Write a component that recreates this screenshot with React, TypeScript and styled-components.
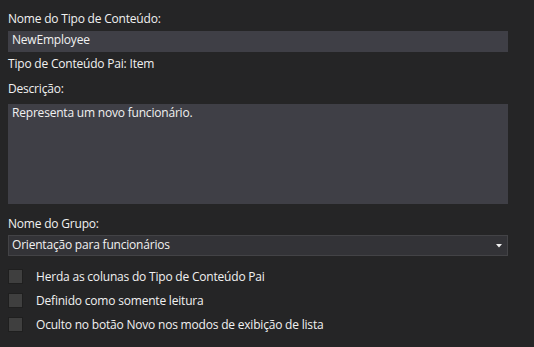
import React from "react";
import styled, { createGlobalStyle } from "styled-components";

const Global = createGlobalStyle`
  html, body { margin: 0; padding: 0; background: #252526; }
  body { font-family: "Segoe UI", "Open Sans", "Noto Sans", sans-serif; }
`;

const Page = styled.div`
  width: 534px;
  height: 347px;
  background: #252526;
  box-sizing: border-box;
  padding: 11px 0 0 8px;
  display: flex;
  flex-direction: column;
  font-size: 12px;
  line-height: 16px;
  letter-spacing: -0.2px;
  color: #f1f1f1;
  overflow: hidden;
`;

const Label = styled.div<{ $mt?: number }>`
  margin-top: ${(p) => p.$mt ?? 0}px;
  height: 16px;
  white-space: nowrap;
`;

const TextBox = styled.div<{ $mt?: number; $h?: number }>`
  margin-top: ${(p) => p.$mt ?? 0}px;
  width: 500px;
  height: ${(p) => p.$h ?? 21}px;
  box-sizing: border-box;
  background: #3f3f46;
  padding: 1px 4px 0;
  color: #f1f1f1;
  white-space: nowrap;
`;

const Select = styled.div<{ $mt?: number }>`
  margin-top: ${(p) => p.$mt ?? 0}px;
  width: 500px;
  height: 21px;
  box-sizing: border-box;
  background: #333337;
  border: 1px solid #434346;
  padding: 1px 4px 0 3px;
  display: flex;
  align-items: flex-start;
  justify-content: space-between;
`;

const Arrow = styled.svg`
  margin-top: 7px;
  margin-right: 1px;
`;

const CheckRows = styled.div`
  margin-top: 12px;
  display: flex;
  flex-direction: column;
  gap: 8px;
`;

const CheckRow = styled.div`
  display: flex;
  align-items: center;
  height: 16px;
  gap: 13px;
`;

const Box = styled.div`
  width: 15px;
  height: 15px;
  box-sizing: border-box;
  background: #3f3f3f;
  border: 1px solid #1f1f1f;
`;

const CheckText = styled.span`
  white-space: nowrap;
  padding-top: 1px;
`;

export default function App() {
  return (
    <>
      <Global />
      <Page>
        <Label>Nome do Tipo de Conteúdo:</Label>
        <TextBox $mt={4}>NewEmployee</TextBox>
        <Label $mt={4}>Tipo de Conteúdo Pai: Item</Label>
        <Label $mt={9}>Descrição:</Label>
        <TextBox $mt={7} $h={100}>Representa um novo funcionário.</TextBox>
        <Label $mt={12}>Nome do Grupo:</Label>
        <Select $mt={3}>
          <span>Orientação para funcionários</span>
          <Arrow width="6" height="4" viewBox="0 0 6 4">
            <path d="M0 0 H6 L3 3.5 Z" fill="#f1f1f1" />
          </Arrow>
        </Select>
        <CheckRows>
          <CheckRow>
            <Box />
            <CheckText>Herda as colunas do Tipo de Conteúdo Pai</CheckText>
          </CheckRow>
          <CheckRow>
            <Box />
            <CheckText>Definido como somente leitura</CheckText>
          </CheckRow>
          <CheckRow>
            <Box />
            <CheckText>Oculto no botão Novo nos modos de exibição de lista</CheckText>
          </CheckRow>
        </CheckRows>
      </Page>
    </>
  );
}
